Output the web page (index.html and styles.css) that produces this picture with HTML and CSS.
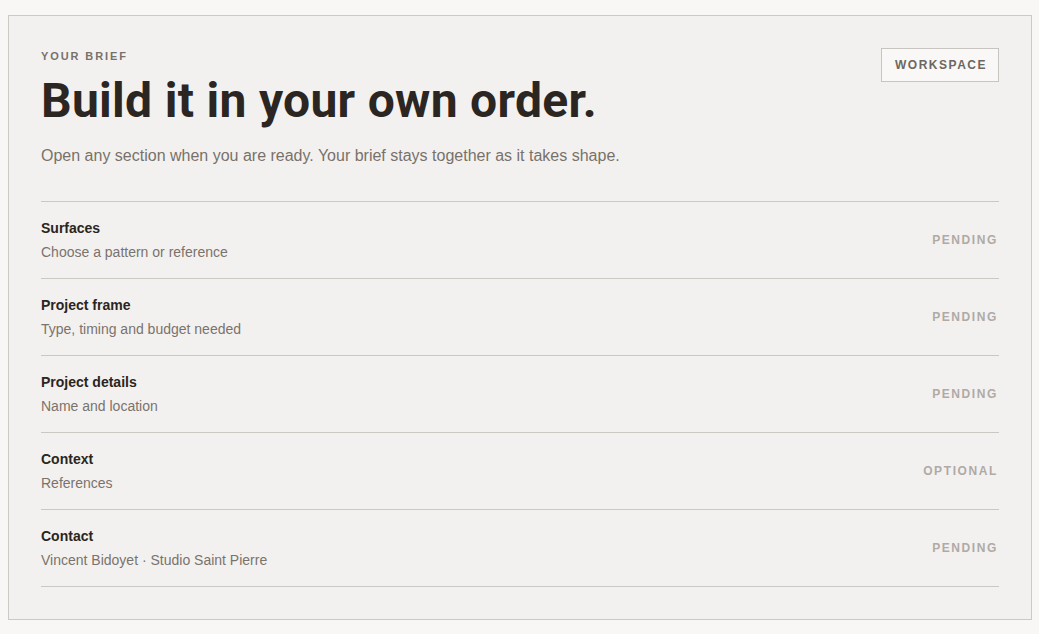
FILE: index.html
```html
<!DOCTYPE html>
<html lang="en">
<head>
<meta charset="utf-8">
<title>Your brief</title>
<link rel="stylesheet" href="styles.css">
</head>
<body>
<main class="panel">
  <header class="head">
    <div class="intro">
      <p class="eyebrow">YOUR BRIEF</p>
      <h1 class="title">Build it in your own order.</h1>
      <p class="lede">Open any section when you are ready. Your brief stays together as it takes shape.</p>
    </div>
    <button class="workspace" type="button">WORKSPACE</button>
  </header>
  <ul class="sections">
    <li class="row">
      <div class="row-text"><span class="row-title">Surfaces</span><span class="row-sub">Choose a pattern or reference</span></div>
      <span class="status">PENDING</span>
    </li>
    <li class="row">
      <div class="row-text"><span class="row-title">Project frame</span><span class="row-sub">Type, timing and budget needed</span></div>
      <span class="status">PENDING</span>
    </li>
    <li class="row">
      <div class="row-text"><span class="row-title">Project details</span><span class="row-sub">Name and location</span></div>
      <span class="status">PENDING</span>
    </li>
    <li class="row">
      <div class="row-text"><span class="row-title">Context</span><span class="row-sub">References</span></div>
      <span class="status">OPTIONAL</span>
    </li>
    <li class="row">
      <div class="row-text"><span class="row-title">Contact</span><span class="row-sub">Vincent Bidoyet · Studio Saint Pierre</span></div>
      <span class="status">PENDING</span>
    </li>
  </ul>
</main>
</body>
</html>
```

FILE: styles.css
```css
* { box-sizing: border-box; }
html, body { margin: 0; }
body {
  background: #f9f7f5;
  font-family: "Liberation Sans", Arial, sans-serif;
  padding: 15px 8px;
}
.panel {
  width: 1024px;
  border: 1px solid #cdc9c5;
  background: #f3f1ef;
  padding: 32px 32px 32px;
}
.head {
  display: flex;
  justify-content: space-between;
  align-items: flex-start;
}
.eyebrow {
  margin: 0;
  padding-top: 1px;
  font-size: 11px;
  line-height: 14px;
  font-weight: 700;
  letter-spacing: 1.9px;
  color: #77716c;
}
.title {
  margin: 10px 0 0;
  font-family: "Roboto", "Liberation Sans", sans-serif;
  font-size: 48px;
  line-height: 56px;
  font-weight: 700;
  letter-spacing: 0.3px;
  color: #2b2622;
}
.lede {
  margin: 15px 0 0;
  font-size: 16px;
  line-height: 24px;
  color: #78716b;
}
.workspace {
  margin-top: 0;
  width: 118px;
  height: 34px;
  border: 1px solid #c8c4c0;
  background: #f9f8f6;
  font-family: "Liberation Sans", Arial, sans-serif;
  font-size: 12px;
  font-weight: 700;
  letter-spacing: 1.5px;
  color: #6d6762;
  padding: 0 0 0 2px;
}
.sections {
  list-style: none;
  margin: 33px 0 0;
  padding: 0;
  border-top: 1px solid #cbc7c3;
}
.row {
  display: flex;
  justify-content: space-between;
  align-items: center;
  height: 77px;
  border-bottom: 1px solid #cbc7c3;
  padding-bottom: 1px;
}
.row-text {
  display: flex;
  flex-direction: column;
  gap: 4px;
}
.row-title {
  font-size: 14px;
  line-height: 20px;
  font-weight: 700;
  color: #2a2521;
}
.row-sub {
  font-size: 14px;
  line-height: 20px;
  color: #7a736d;
}
.status {
  font-size: 12px;
  font-weight: 700;
  letter-spacing: 1.6px;
  color: #afaaa6;
  margin-right: 1px;
}
```
